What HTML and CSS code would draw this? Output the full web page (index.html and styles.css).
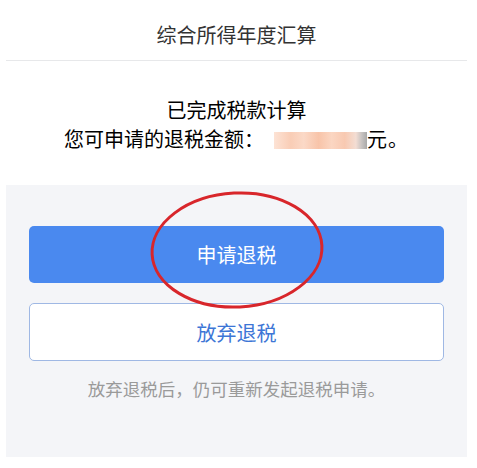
FILE: index.html
```html
<!DOCTYPE html>
<html lang="zh-CN">
<head>
<meta charset="utf-8">
<link rel="stylesheet" href="styles.css">
</head>
<body>
<div class="page">
  <header class="header">
    <h1 class="title">综合所得年度汇算</h1>
  </header>
  <section class="summary">
    <p class="line">已完成税款计算</p>
    <p class="line">您可申请的退税金额：<span class="amount"></span><span class="yuan">元。</span></p>
  </section>
  <section class="panel">
    <button class="btn btn-primary">申请退税</button>
    <button class="btn btn-outline">放弃退税</button>
    <p class="note">放弃退税后，仍可重新发起退税申请。</p>
    <svg class="mark" width="180" height="124" viewBox="0 0 180 124">
      <ellipse cx="90" cy="62" rx="85" ry="57" fill="none" stroke="#d8262b" stroke-width="3" transform="rotate(-3 90 62)"/>
    </svg>
  </section>
</div>
</body>
</html>
```

FILE: styles.css
```css
* { box-sizing: border-box; }
html, body { margin: 0; padding: 0; background: #fff; }
body {
  font-family: "Noto Sans CJK SC", "Noto Sans", sans-serif;
  color: #1a1a1a;
}
.page {
  width: 477px;
  padding: 0 10px 0 6px;
}
.header {
  height: 61px;
  padding-top: 22px;
  border-bottom: 1.5px solid #e7e8ea;
}
.title {
  margin: 0;
  font-size: 20px;
  font-weight: 400;
  line-height: 26px;
  text-align: center;
  color: #333;
}
.summary {
  padding: 34px 0 32px;
  text-align: center;
}
.line {
  margin: 0;
  font-size: 20px;
  font-weight: 400;
  line-height: 29px;
  color: #000;
}
.amount {
  display: inline-block;
  vertical-align: -2px;
  width: 93px;
  height: 17px;
  margin-left: 10px;
  background: linear-gradient(90deg, #fde3d5 0%, #f9cdb6 18%, #fbd9c7 32%, #f8c4a9 48%, #fbd6c2 62%, #f8c9b1 76%, #f3ddd3 88%, #c9c4c2 94%, #a9a9a9 100%);
}
.yuan { letter-spacing: 1px; }
.panel {
  position: relative;
  background: #f4f5f8;
  padding: 41px 23px 56px;
  display: flex;
  flex-direction: column;
}
.btn {
  display: block;
  width: 100%;
  font-family: inherit;
  font-size: 20px;
  font-weight: 400;
  border-radius: 5px;
  cursor: pointer;
}
.btn-primary {
  height: 57px;
  background: #4a89ef;
  color: #fff;
  border: none;
}
.btn-outline {
  height: 58px;
  margin-top: 20px;
  background: #fff;
  color: #3d76d6;
  border: 1px solid #9fb8e4;
}
.note {
  margin: 16px 0 0;
  font-size: 17.5px;
  line-height: 24px;
  text-align: center;
  color: #9a9a9a;
}
.mark {
  position: absolute;
  left: 141px;
  top: 3px;
}
```
